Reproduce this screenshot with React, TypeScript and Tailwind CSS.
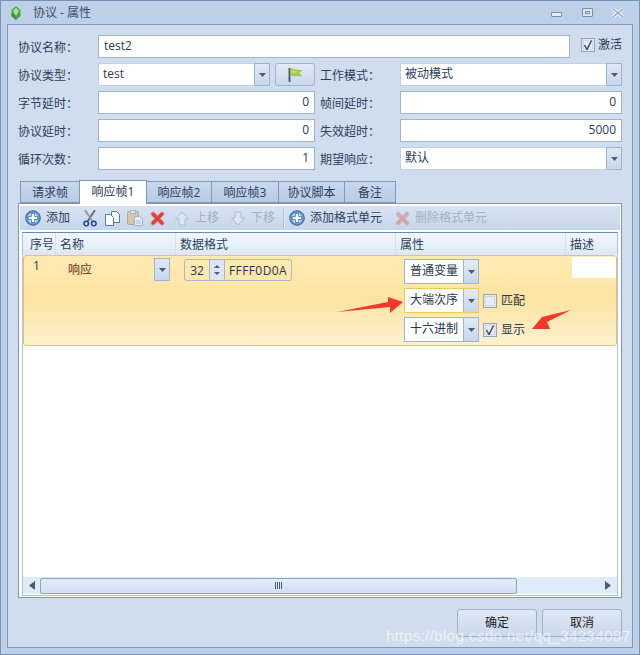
import type { ReactNode } from "react";

const Caret = () => (
  <svg width="7" height="4" viewBox="0 0 7 4">
    <path d="M0 0h7L3.5 4z" fill="#4a5a78" />
  </svg>
);

function FieldLabel({ children }: { children: ReactNode }) {
  return <div className="w-[80px] h-[23px] shrink-0 text-[#2c3e5c] leading-[23px] pt-[1px]">{children}</div>;
}

function TextBox({ value, right, className }: { value: string; right?: boolean; className?: string }) {
  return (
    <div
      className={`h-[23px] bg-white border border-[#9db4d4] leading-[20px] text-[#2a3c58] px-[5px] ${
        right ? "text-right" : ""
      } ${className ?? ""}`}
    >
      {value}
    </div>
  );
}

function Combo({ value, className }: { value: string; className?: string }) {
  return (
    <div className={`h-[23px] flex bg-white border border-[#c3d1e5] ${className ?? ""}`}>
      <div className="flex-1 leading-[20px] px-[4px] text-[#2a3c58]">{value}</div>
      <div className="w-[16px] -my-[1px] -mr-[1px] flex items-center justify-center border border-[#9db4d4] bg-gradient-to-b from-[#dfe8f5] to-[#c8d7ea]">
        <Caret />
      </div>
    </div>
  );
}

function PlusIcon() {
  return (
    <svg width="16" height="16" viewBox="0 0 16 16">
      <circle cx="8" cy="8" r="7.3" fill="#5f92cf" stroke="#3a6aa8" />
      <circle cx="8" cy="8" r="5.3" fill="#c5dbf2" />
      <path d="M6.5 3.5h3v3h3v3h-3v3h-3v-3h-3v-3h3z" fill="#fff" stroke="#3f74b4" strokeWidth=".8" />
    </svg>
  );
}

function CrossIcon({ faded }: { faded?: boolean }) {
  return (
    <svg width="15" height="15" viewBox="0 0 15 15" opacity={faded ? 0.35 : 1} fill="none">
      <path d="M3 3l9 9M12 3l-9 9" stroke="#eba79e" strokeWidth="5" strokeLinecap="round" />
      <path d="M3 3l9 9M12 3l-9 9" stroke="#d8473b" strokeWidth="3.400" strokeLinecap="round" />
    </svg>
  );
}

function ScissorsIcon() {
  return (
    <svg width="14" height="17" viewBox="0 0 14 17" fill="none">
      <path d="M12 0L4.500 11.500" stroke="#5f6670" strokeWidth="1.800" />
      <path d="M2 0l7.500 11.500" stroke="#9299a3" strokeWidth="1.800" />
      <circle cx="3.200" cy="13.500" r="2.300" stroke="#23479a" strokeWidth="1.500" />
      <circle cx="10.800" cy="13.500" r="2.300" stroke="#23479a" strokeWidth="1.500" />
    </svg>
  );
}

function CopyIcon() {
  return (
    <svg width="15" height="15" viewBox="0 0 15 15">
      <path d="M6.5 .5h5l3 3v8h-8z" fill="#fff" stroke="#4a7fb8" />
      <path d="M.5 3.500h5l3 3v8h-8z" fill="#fff" stroke="#4a7fb8" />
    </svg>
  );
}

function PasteIcon() {
  return (
    <svg width="16" height="16" viewBox="0 0 16 16" opacity=".55">
      <rect x=".5" y="1.500" width="11" height="13" rx="1" fill="#d9b76a" stroke="#9a8450" />
      <rect x="3.500" y=".5" width="5" height="3" fill="#e9e9e9" stroke="#8a8a8a" />
      <path d="M7.500 6.500h5l3 3v6h-8z" fill="#fff" stroke="#6f93bd" />
      <path d="M9 11h5M9 13h5" stroke="#8cabcf" />
    </svg>
  );
}

function MoveIcon({ down }: { down?: boolean }) {
  return (
    <svg width="14" height="15" viewBox="0 0 14 15">
      <path
        d={down ? "M4 1h6v6h3.500L7 14 .5 7H4z" : "M7 1l6.500 7H10v6H4V8H.5z"}
        fill="#dbe6f2"
        stroke="#a9bdd3"
      />
    </svg>
  );
}

function FlagIcon() {
  return (
    <svg width="14" height="16" viewBox="0 0 14 16">
      <path d="M1.500 1v14" stroke="#4f6075" strokeWidth="2" />
      <path d="M2.500 1.500L7 2.800 13.500 3.500 10.500 6l3 2.500-6.500.3L2.500 8z" fill="#a8cc3c" stroke="#8cad2c" strokeWidth=".5" />
      <path d="M3 2.500l4 1 2 .3-1 2.500-5-.8z" fill="#c6e05c" />
    </svg>
  );
}

function Check({ checked }: { checked?: boolean }) {
  return (
    <div className="w-[14px] h-[14px] border border-[#8da5c8] bg-[#e2e8f2] p-[1px] shrink-0">
      <div className="w-full h-full bg-[#e8ecf3] border border-[#d0d7e3] flex items-center justify-center">
        {checked && (
          <svg width="10" height="10" viewBox="0 0 10 10" className="shrink-0">
            <path d="M1.500 5L4 9.500 8.500 .5" fill="none" stroke="#3d4c66" strokeWidth="1.500" />
          </svg>
        )}
      </div>
    </div>
  );
}

function ToolItem({
  icon,
  label,
  faded,
  className,
  labelGap = "ml-[5px]",
}: {
  icon: ReactNode;
  label?: string;
  faded?: boolean;
  className?: string;
  labelGap?: string;
}) {
  return (
    <div className={`flex items-center shrink-0 ${className ?? ""}`}>
      {icon}
      {label && <span className={`${labelGap} ${faded ? "text-[#a3b1c4]" : "text-[#2c3e5c]"}`}>{label}</span>}
    </div>
  );
}

function PropCombo({ value, focused }: { value: string; focused?: boolean }) {
  return (
    <div
      className={`w-[75px] h-[25px] shrink-0 flex bg-white border ${
        focused ? "border-[#f0c95c]" : "border-[#9db4d4]"
      }`}
    >
      <div className="w-[58px] leading-[22px] text-center text-[#26374f]">{value}</div>
      <div className="flex-1 flex items-center justify-center border-l border-[#9db4d4] bg-gradient-to-b from-[#e3ebf6] to-[#c8d7ea]">
        <Caret />
      </div>
    </div>
  );
}

const tabs = [
  { label: "请求帧", w: "w-[60px]" },
  { label: "响应帧1", w: "w-[68px]" },
  { label: "响应帧2", w: "w-[66px]" },
  { label: "响应帧3", w: "w-[68px]" },
  { label: "协议脚本", w: "w-[67px]" },
  { label: "备注", w: "w-[52px]" },
];

function HeaderCell({ label, className }: { label: string; className: string }) {
  return (
    <div className={`h-full border-r border-[#d5e1f0] leading-[24px] text-[#2c3e5c] ${className}`}>{label}</div>
  );
}

export default function App() {
  return (
    <div
      className="relative w-[640px] h-[655px] overflow-hidden flex flex-col border border-[#7592b8] bg-[#bdd0e8] text-[12px]"
      style={{ fontFamily: '"Open Sans", "Noto Sans CJK SC", sans-serif' }}
    >
      {/* title bar */}
      <div className="h-[23px] shrink-0 flex items-center pl-[10px] pr-[15px]">
        <svg width="10" height="14" viewBox="0 0 10 14">
          <path d="M5 0l4.500 4v6L5 14 .5 10V4z" fill="#4fa34f" />
          <path d="M5 1.500L8 5 5 10 2 5z" fill="#a4e08e" />
          <path d="M5 10v4L.5 10V7z" fill="#3f8f48" />
        </svg>
        <span className="ml-[12px] text-[#3c4f6c] text-[12px]">协议 - 属性</span>
        <div className="ml-auto flex items-center">
          <div className="w-[11px] h-[5px] mt-[4px] border border-[#7c90ad] bg-[#e6edf6] rounded-[1px]" />
          <div className="ml-[20px] w-[11px] h-[9px] border border-[#7c90ad] bg-[#dbe5f2] flex items-center justify-center rounded-[1px]">
            <div className="w-[5px] h-[3px] border border-[#7c90ad]" />
          </div>
          <svg className="ml-[19px]" width="12" height="10" viewBox="0 0 12 10">
            <path d="M1 1l10 8M11 1L1 9" stroke="#eef3f9" strokeWidth="3.400" />
            <path d="M1 1l10 8M11 1L1 9" stroke="#8ea3be" strokeWidth="1.200" />
          </svg>
        </div>
      </div>

      {/* client */}
      <div className="ml-[6px] mr-[6px] w-[626px] h-[624px] shrink-0 border border-[#7d98bb] bg-[#d0ddee] pl-[10px] pt-[10px] flex flex-col">
        <div className="flex flex-col gap-[5px]">
          <div className="flex">
            <FieldLabel>协议名称：</FieldLabel>
            <TextBox value="test2" className="w-[472px]" />
            <div className="ml-[11px] mt-[3px] flex items-center gap-[3px] h-[14px]">
              <Check checked />
              <span className="text-[#2c3e5c]">激活</span>
            </div>
          </div>
          <div className="flex">
            <FieldLabel>协议类型：</FieldLabel>
            <Combo value="test" className="w-[172px]" />
            <div className="ml-[5px] w-[40px] h-[23px] flex items-center justify-center rounded-[3px] border border-[#9db4d4] bg-gradient-to-b from-[#e3ebf6] to-[#c9d8ec]">
              <FlagIcon />
            </div>
            <div className="ml-[5px]">
              <FieldLabel>工作模式：</FieldLabel>
            </div>
            <Combo value="被动模式" className="w-[222px]" />
          </div>
          <div className="flex">
            <FieldLabel>字节延时：</FieldLabel>
            <TextBox value="0" right className="w-[217px]" />
            <div className="ml-[5px]">
              <FieldLabel>帧间延时：</FieldLabel>
            </div>
            <TextBox value="0" right className="w-[222px]" />
          </div>
          <div className="flex">
            <FieldLabel>协议延时：</FieldLabel>
            <TextBox value="0" right className="w-[217px]" />
            <div className="ml-[5px]">
              <FieldLabel>失效超时：</FieldLabel>
            </div>
            <TextBox value="5000" right className="w-[222px]" />
          </div>
          <div className="flex">
            <FieldLabel>循环次数：</FieldLabel>
            <TextBox value="1" right className="w-[217px]" />
            <div className="ml-[5px]">
              <FieldLabel>期望响应：</FieldLabel>
            </div>
            <Combo value="默认" className="w-[222px]" />
          </div>
        </div>

        {/* tabs */}
        <div className="mt-[10px] ml-[2px] flex h-[23px] items-end relative z-10">
          {tabs.map((t, i) =>
            i === 1 ? (
              <div
                key={t.label}
                className={`${t.w} h-[24px] -ml-[1px] -mb-[1px] relative z-10 bg-white border border-b-0 border-[#7d98bb] text-center leading-[22px] text-[#26374f]`}
              >
                {t.label}
              </div>
            ) : (
              <div
                key={t.label}
                className={`${t.w} h-[22px] border border-[#7d98bb] -ml-[1px] first:ml-0 bg-gradient-to-b from-[#c9d8ec] to-[#b7cbe4] text-center leading-[22px] text-[#2c3e5c]`}
              >
                {t.label}
              </div>
            ),
          )}
        </div>

        {/* panel */}
        <div className="w-[604px] h-[395px] border border-[#7d98bb] bg-white p-[1px] flex flex-col">
          <div className="h-[24px] shrink-0 flex items-center pl-[5px] mt-[1px] bg-gradient-to-b from-[#d7e3f2] to-[#c7d6ea]">
            <ToolItem icon={<PlusIcon />} label="添加" />
            <ToolItem className="ml-[13px]" icon={<ScissorsIcon />} />
            <ToolItem className="ml-[8px]" icon={<CopyIcon />} />
            <ToolItem className="ml-[7px]" icon={<PasteIcon />} />
            <ToolItem className="ml-[7px]" icon={<CrossIcon />} />
            <ToolItem className="ml-[10px]" icon={<MoveIcon />} label="上移" labelGap="ml-[6px]" faded />
            <ToolItem className="ml-[12px]" icon={<MoveIcon down />} label="下移" labelGap="ml-[6px]" faded />
            <div className="ml-[8px] w-[2px] h-[20px] border-l border-[#a9bdd3] bg-[#e9f0f8]" />
            <ToolItem className="ml-[4px]" icon={<PlusIcon />} label="添加格式单元" />
            <ToolItem className="ml-[13px]" icon={<CrossIcon faded />} label="删除格式单元" faded />
          </div>

          {/* grid */}
          <div className="mt-[2px] mx-[2px] flex-1 border border-[#a8c4e0] border-t-[#5f8dbd] flex flex-col">
            <div className="h-[22px] shrink-0 flex bg-gradient-to-b from-[#f3f7fd] to-[#dde8f6]">
              <HeaderCell label="序号" className="w-[33px] pl-[7px]" />
              <HeaderCell label="名称" className="w-[120px] pl-[4px]" />
              <HeaderCell label="数据格式" className="w-[220px] pl-[4px]" />
              <HeaderCell label="属性" className="w-[170px] pl-[4px]" />
              <div className="leading-[24px] pl-[4px] text-[#2c3e5c]">描述</div>
            </div>

            <div className="h-[91px] shrink-0 flex rounded-[3px] border border-[#e6c27e] bg-gradient-to-b from-[#feeab2] via-[#fee4a2] to-[#fbf1cf]">
              <div className="w-[32px] pl-[9px] pt-[1px] text-[#26374f]">1</div>
              <div className="w-[120px] flex items-start pt-[2px]">
                <span className="ml-[12px] mt-[3px] text-[#6b2a14]">响应</span>
                <div className="ml-[62px] w-[16px] h-[23px] flex items-center justify-center border border-[#9db4d4] bg-gradient-to-b from-[#dfe8f5] to-[#c8d7ea]">
                  <Caret />
                </div>
              </div>
              <div className="w-[220px] pl-[8px] pt-[3px]">
                <div className="w-[108px] h-[22px] flex rounded-[3px] border border-[#a9b8cc]">
                  <div className="w-[24px] leading-[21px] text-center text-[#26374f]">32</div>
                  <div className="w-[16px] flex flex-col items-center justify-center gap-[4px] border-x border-[#a9b8cc] bg-[#dce6f3]">
                    <svg width="6" height="3" viewBox="0 0 6 3">
                      <path d="M0 3h6L3 0z" fill="#4a5a78" />
                    </svg>
                    <svg width="6" height="3" viewBox="0 0 6 3">
                      <path d="M0 0h6L3 3z" fill="#4a5a78" />
                    </svg>
                  </div>
                  <div className="flex-1 leading-[21px] text-center tracking-[0.4px] text-[#26374f]">FFFF0D0A</div>
                </div>
              </div>
              <div className="w-[168px] pl-[8px] pt-[3px] flex flex-col gap-[4px]">
                <PropCombo value="普通变量" />
                <div className="flex items-center">
                  <PropCombo value="大端次序" focused />
                  <div className="ml-[4px] flex items-center gap-[4px] text-[#26374f]">
                    <Check />
                    匹配
                  </div>
                </div>
                <div className="flex items-center">
                  <PropCombo value="十六进制" />
                  <div className="ml-[4px] flex items-center gap-[4px] text-[#26374f]">
                    <Check checked />
                    显示
                  </div>
                </div>
              </div>
              <div className="flex-1 pl-[8px] pt-[1px]">
                <div className="h-[21px] bg-white" />
              </div>
            </div>

            <div className="flex-1" />

            <div className="h-[17px] mb-[1px] shrink-0 flex items-center bg-[#deebf9]">
              <div className="w-[17px] flex justify-center">
                <svg width="6" height="9" viewBox="0 0 6 9">
                  <path d="M6 0v9L0 4.500z" fill="#4a5a78" />
                </svg>
              </div>
              <div className="w-[477px] h-[16px] flex items-center justify-center rounded-[2px] border border-[#8da5c8] bg-gradient-to-b from-[#e3edf9] to-[#cfdff2]">
                <div className="w-[7px] h-[7px] border-x border-[#4a5a78] flex justify-center">
                  <div className="w-[3px] h-full border-x border-[#4a5a78]" />
                </div>
              </div>
              <div className="ml-auto mr-[6px]">
                <svg width="6" height="9" viewBox="0 0 6 9">
                  <path d="M0 0v9l6-4.500z" fill="#4a5a78" />
                </svg>
              </div>
            </div>
          </div>
        </div>

        {/* footer buttons */}
        <div className="mt-[11px] w-[604px] flex justify-end gap-[5px]">
          <div className="w-[80px] h-[28px] rounded-[3px] border border-[#9db0cc] bg-gradient-to-b from-[#dfe8f5] to-[#c9d8ec] text-center leading-[26px] text-[#1a1a1a]">
            确定
          </div>
          <div className="w-[80px] h-[28px] rounded-[3px] border border-[#9db0cc] bg-gradient-to-b from-[#dfe8f5] to-[#c9d8ec] text-center leading-[26px] text-[#1a1a1a]">
            取消
          </div>
        </div>
      </div>

      {/* annotation arrows */}
      <svg className="absolute left-[-1px] top-[-1px] pointer-events-none" width="640" height="655">
        <path d="M337 312L388 302L388 297L403 302L390 313L390 307z" fill="#f0392c" />
        <path d="M571 310L542 317L532 329L550 329L547 322z" fill="#f0392c" />
      </svg>

      {/* watermark */}
      <div
        className="absolute left-[385px] top-[623px] text-[15.500px] text-white/60 whitespace-nowrap tracking-[0.2px]"
        style={{ fontFamily: '"Liberation Sans", sans-serif' }}
      >
        https://blog.csdn.net/qq_34234087
      </div>
    </div>
  );
}
